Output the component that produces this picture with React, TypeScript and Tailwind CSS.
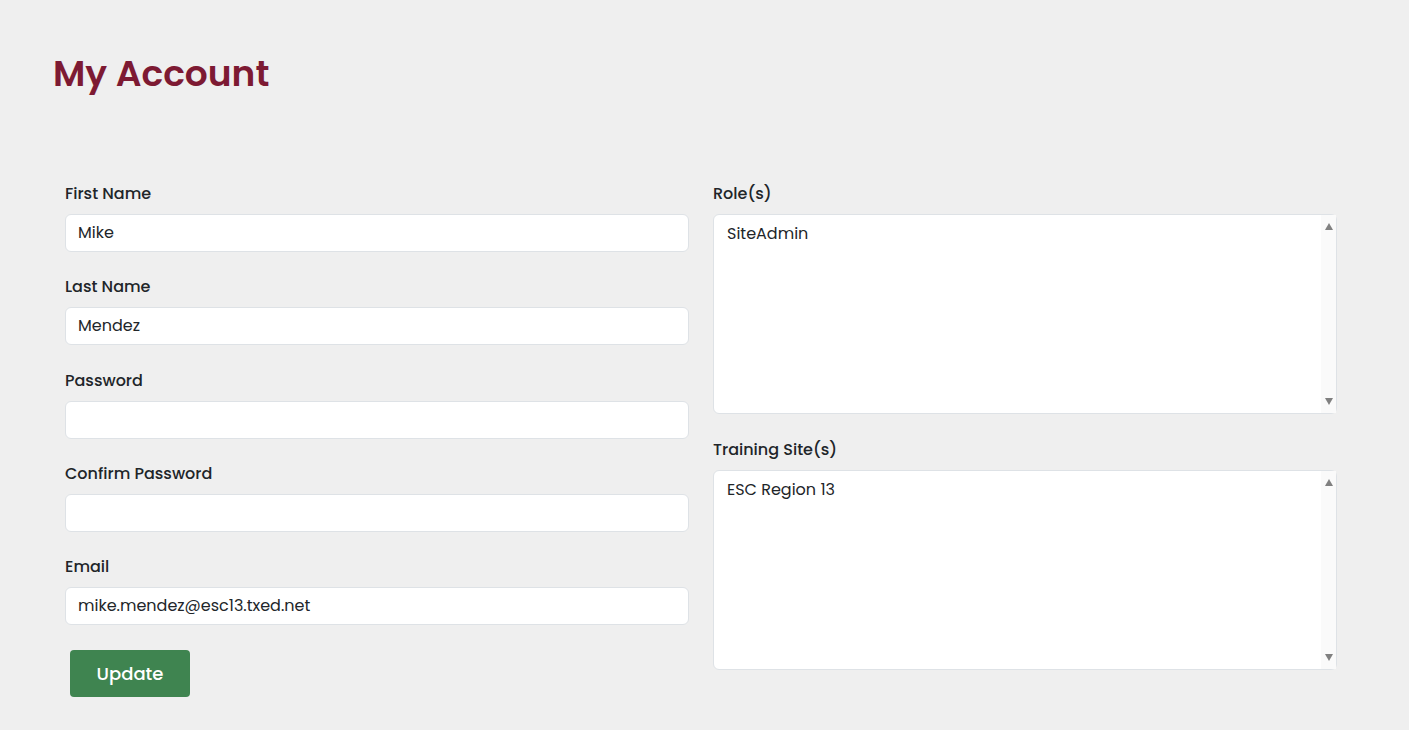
const font = "font-['Poppins','DejaVu_Sans',sans-serif]";

function Field({ label, value }: { label: string; value?: string }) {
  return (
    <div className="mb-[23.3px]">
      <label className="mb-2 block text-[16px] font-medium leading-6 text-[#212529]">{label}</label>
      <div className="flex h-[38px] items-center rounded-md border border-[#dee2e6] bg-white px-3 text-[16px] text-[#212529]">
        {value}
      </div>
    </div>
  );
}

function ListBox({ label, items }: { label: string; items: string[] }) {
  return (
    <div className="mb-6">
      <label className="mb-2 block text-[16px] font-medium leading-6 text-[#212529]">{label}</label>
      <div className="flex h-[200px] rounded-md border border-[#dee2e6] bg-white">
        <div className="flex-1 px-[13px] py-[7px] text-[16px] leading-6 text-[#212529]">
          {items.map((i) => (
            <div key={i}>{i}</div>
          ))}
        </div>
        <div className="flex w-[15px] flex-col items-center justify-between bg-[#fafafa] py-[8px]">
          <span className="h-0 w-0 border-x-[4.5px] border-b-[7px] border-x-transparent border-b-[#808080]" />
          <span className="h-0 w-0 border-x-[4.5px] border-t-[7px] border-x-transparent border-t-[#808080]" />
        </div>
      </div>
    </div>
  );
}

export default function App() {
  return (
    <div className={`min-h-[730px] bg-[#efefef] px-[53px] pt-[50px] ${font}`}>
      <h1 className="text-[36px] font-semibold leading-[48px] text-[#7d1a33]">My Account</h1>

      <div className="mt-[84px] grid w-[1296px] grid-cols-2">
        <div className="px-3">
          <Field label="First Name" value="Mike" />
          <Field label="Last Name" value="Mendez" />
          <Field label="Password" />
          <Field label="Confirm Password" />
          <Field label="Email" value="mike.mendez@esc13.txed.net" />
          <button className="ml-[5px] mt-[2px] h-[47px] w-[120px] rounded-[4px] bg-[#3f8450] text-[18px] font-medium text-white">
            Update
          </button>
        </div>
        <div className="px-3">
          <ListBox label="Role(s)" items={["SiteAdmin"]} />
          <ListBox label="Training Site(s)" items={["ESC Region 13"]} />
        </div>
      </div>
    </div>
  );
}
